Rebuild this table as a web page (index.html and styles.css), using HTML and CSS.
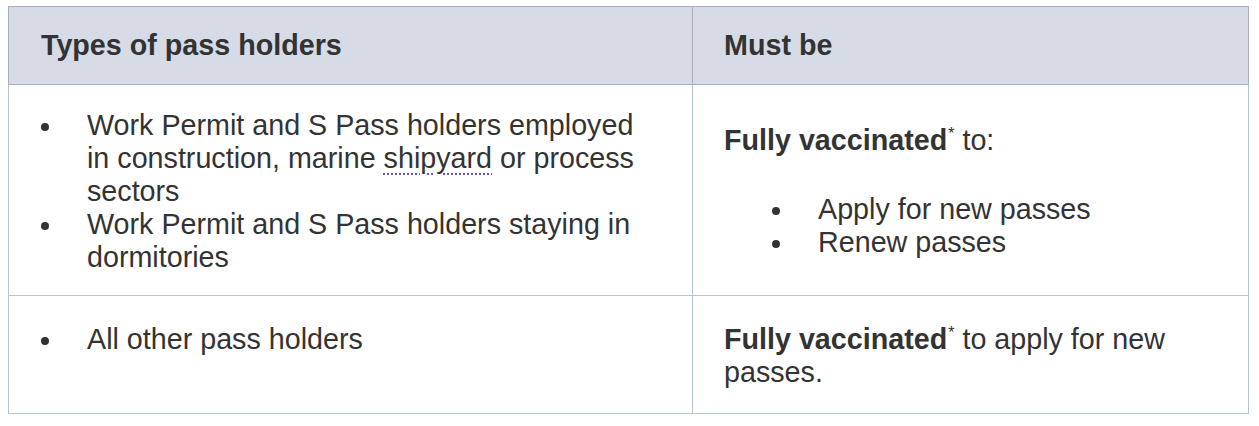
FILE: index.html
```html
<!DOCTYPE html>
<html lang="en">
<head>
<meta charset="utf-8">
<title>Pass holders</title>
<link rel="stylesheet" href="styles.css">
</head>
<body>
<table class="passes">
  <thead>
    <tr>
      <th class="col-a">Types of pass holders</th>
      <th class="col-b">Must be</th>
    </tr>
  </thead>
  <tbody>
    <tr class="row-one">
      <td>
        <ul class="bullets">
          <li><span class="dot"></span><span class="item">Work Permit and S Pass holders employed in construction, marine <span class="spell">shipyard</span> or process sectors</span></li>
          <li><span class="dot"></span><span class="item">Work Permit and S Pass holders staying in dormitories</span></li>
        </ul>
      </td>
      <td class="right">
        <p class="lead"><strong>Fully vaccinated</strong><sup>*</sup> to:</p>
        <ul class="bullets nested">
          <li><span class="dot"></span><span class="item">Apply for new passes</span></li>
          <li><span class="dot"></span><span class="item">Renew passes</span></li>
        </ul>
      </td>
    </tr>
    <tr class="row-two">
      <td>
        <ul class="bullets">
          <li><span class="dot"></span><span class="item">All other pass holders</span></li>
        </ul>
      </td>
      <td class="right">
        <p class="lead plain"><strong>Fully vaccinated</strong><sup>*</sup> to apply for new passes.</p>
      </td>
    </tr>
  </tbody>
</table>
</body>
</html>
```
FILE: styles.css
```css
html, body {
  margin: 0;
  padding: 0;
  background: #ffffff;
}
body {
  padding: 6px 0 0 8px;
  font-family: "Liberation Sans", Arial, sans-serif;
  color: #333333;
}
.passes {
  border-collapse: collapse;
  width: 1241px;
  table-layout: fixed;
  font-size: 28.7px;
  line-height: 33px;
}
.passes th,
.passes td {
  text-align: left;
  vertical-align: top;
  padding: 0 30px 0 32px;
}
.passes th {
  background: #d6dbe6;
  border: 1px solid #a9aeb9;
  height: 77px;
  vertical-align: middle;
  font-weight: bold;
}
.passes .col-b,
.passes .right {
  padding-left: 31px;
}
.col-a { width: 621px; }
.passes td {
  border: 1px solid #b5c5d2;
}
.row-one td {
  padding-top: 24px;
  padding-bottom: 21px;
}
.row-two td {
  padding-top: 27px;
  padding-bottom: 22px;
  height: 68px;
}
.bullets {
  list-style: none;
  margin: 0;
  padding: 0;
}
.bullets li {
  display: flex;
  align-items: flex-start;
}
.dot {
  flex: 0 0 auto;
  width: 8px;
  height: 8px;
  border-radius: 50%;
  background: #333333;
  margin: 14px 38px 0 0;
}
.item {
  flex: 1 1 auto;
}
.nested {
  margin-top: 36px;
  padding-left: 48px;
}
.lead {
  margin: 15px 0 0 0;
}
.lead.plain {
  margin-top: 0;
}
.lead strong {
  font-weight: bold;
}
sup {
  font-size: 16px;
  line-height: 0;
  vertical-align: 11px;
  margin-left: 1px;
}
.spell {
  text-decoration: underline dotted #6654e0;
  text-decoration-thickness: 2px;
  text-underline-offset: 5px;
}
```
